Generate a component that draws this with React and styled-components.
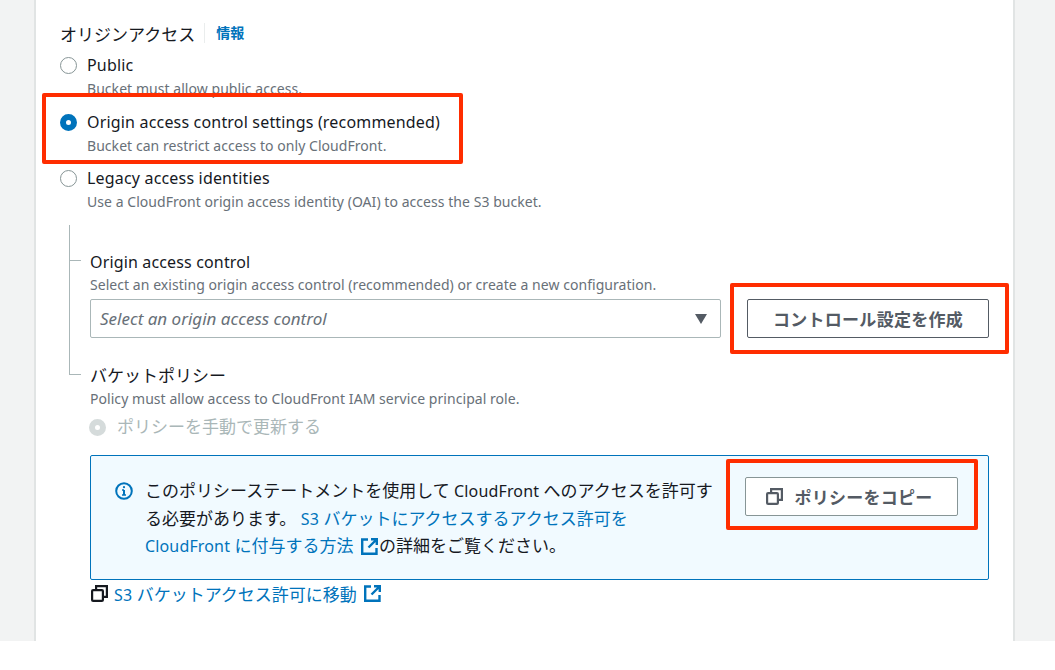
import styled, { createGlobalStyle } from 'styled-components'

const GlobalStyle = createGlobalStyle`
  html, body { margin: 0; padding: 0; background: #fff; }
  body {
    font-family: "Noto Sans", "Noto Sans CJK JP", sans-serif;
    color: #16191f;
    -webkit-font-smoothing: antialiased;
  }
`

const Page = styled.div`
  height: 641px;
  overflow: hidden;
  background: #f2f3f3;
  padding: 0 40px 0 34px;
`

const Panel = styled.main`
  height: 100%;
  box-sizing: border-box;
  background: #fff;
  border-inline: 2px solid #e1e4e4;
  padding: 21px 0 0 24px;
`

const Heading = styled.div`
  display: flex;
  align-items: center;
  height: 24px;
  margin-bottom: 8px;
  font-size: 17px;
`

const InfoLink = styled.a`
  margin-left: 9px;
  padding-left: 11px;
  border-left: 1px solid #eaeded;
  color: #0073bb;
  font-size: 14px;
  font-weight: 700;
  line-height: 20px;
`

const RadioGroup = styled.div`
  display: flex;
  flex-direction: column;
  gap: 8.5px;
`

const RadioItem = styled.div`
  position: relative;
  display: grid;
  grid-template-columns: 17px 1fr;
  column-gap: 10px;
`

const RadioDot = styled.span`
  box-sizing: border-box;
  width: 17px;
  height: 17px;
  margin-top: 4px;
  border-radius: 50%;
  background: #fff;
  border: ${({ $checked, $disabled }) =>
    $disabled ? '6px solid #d5dbdb' : $checked ? '6px solid #0073bb' : '1.5px solid #879596'};
`

const RadioLabel = styled.div`
  font-size: ${({ $jp }) => ($jp ? '17px' : '16px')};
  letter-spacing: ${({ $jp }) => ($jp ? '0' : '.18px')};
  line-height: 24px;
  color: ${({ $disabled }) => ($disabled ? '#aab7b8' : '#16191f')};
`

const Description = styled.div`
  font-size: 14px;
  letter-spacing: .05px;
  line-height: 24px;
  color: #687078;
  grid-column: 2;
`

const Tree = styled.div`
  margin: 11px 0 0 9px;
  padding-left: 21px;
  width: 899px;
`

const Field = styled.section`
  position: relative;
  padding-top: ${({ $last }) => ($last ? '27px' : '26px')};

  &::before {
    content: '';
    position: absolute;
    left: -21px;
    top: ${({ $last }) => ($last ? '36px' : '35px')};
    width: 12px;
    height: 1px;
    background: #aab7b8;
  }

  &::after {
    content: '';
    position: absolute;
    left: -21px;
    top: 0;
    width: 1px;
    height: ${({ $last }) => ($last ? '37px' : '100%')};
    background: #aab7b8;
  }
`

const FieldLabel = styled.div`
  font-size: ${({ $jp }) => ($jp ? '17px' : '16px')};
  letter-spacing: ${({ $jp }) => ($jp ? '0' : '.15px')};
  line-height: 22px;
`

const FieldHint = styled.div`
  font-size: 14px;
  letter-spacing: .05px;
  line-height: 24px;
  color: #687078;
`

const SelectRow = styled.div`
  display: flex;
  gap: 26px;
  margin-top: 2px;
`

const Select = styled.div`
  flex: 1;
  height: 39px;
  box-sizing: border-box;
  display: flex;
  align-items: center;
  justify-content: space-between;
  padding: 0 13px 0 9px;
  border: 1px solid #aab7b8;
  border-radius: 2px;
  font-size: 17px;
  font-style: italic;
  color: #687078;
`

const Caret = styled.span`
  width: 0;
  height: 0;
  border-left: 6px solid transparent;
  border-right: 6px solid transparent;
  border-top: 10px solid #545b64;
`

const Button = styled.div`
  position: relative;
  box-sizing: border-box;
  display: flex;
  align-items: center;
  justify-content: center;
  gap: 11px;
  flex: none;
  width: ${({ $width }) => $width}px;
  height: 39px;
  padding-right: ${({ $soft }) => ($soft ? '4px' : '0')};
  background: #fff;
  border: 1px solid ${({ $soft }) => ($soft ? '#879596' : '#545b64')};
  border-radius: 2px;
  color: #545b64;
  font-size: 17px;
  font-weight: 700;
  letter-spacing: .28px;
`

// 注釈の赤枠
const Highlight = styled.span`
  position: absolute;
  box-sizing: border-box;
  inset: ${({ $inset }) => $inset};
  border: 4px solid #ff2d00;
  border-radius: 2px;
  pointer-events: none;
`

const DisabledRadio = styled.div`
  display: grid;
  grid-template-columns: 17px 1fr;
  column-gap: 11px;
  margin: 4px 0 0 -1px;
`

const Alert = styled.div`
  display: flex;
  justify-content: space-between;
  align-items: flex-start;
  box-sizing: border-box;
  height: 125px;
  margin-top: 16px;
  padding: 21px 30px 0 24px;
  background: #f1faff;
  border: 1px solid #0073bb;
  border-radius: 2px;
`

const AlertBody = styled.div`
  display: flex;
  gap: 12px;
`

const AlertText = styled.p`
  margin: 0;
  font-size: 17px;
  line-height: 27.5px;
  white-space: nowrap;
`

const Latin = styled.span`
  font-size: 16px;
  letter-spacing: .15px;
  line-height: 1;
`

const Link = styled.a`
  color: #0073bb;
`

const BucketLink = styled.div`
  display: flex;
  align-items: center;
  gap: 6px;
  height: 22px;
  margin-top: 2px;
  padding-left: 1px;
  font-size: 17px;
`

const ExternalSvg = styled.svg`
  flex: none;
  vertical-align: -3px;
  margin: ${({ $inline }) => ($inline ? '0 1px 0 3px' : '0 0 0 1px')};
`

const CopyIcon = ({ color = '#16191f' }) => (
  <svg width="17" height="17" viewBox="0 0 17 17" fill="none" stroke={color} strokeWidth="2.2" style={{ flex: 'none' }}>
    <rect x="1.1" y="5.1" width="10.8" height="10.8" rx="1" />
    <path d="M5.1 5V1.1h10.8v10.8H12" />
  </svg>
)

const ExternalIcon = ({ inline }) => (
  <ExternalSvg $inline={inline} width="17" height="17" viewBox="0 0 17 17" fill="none" stroke="#0073bb" strokeWidth="2.4">
    <path d="M7 1.5H1.2v14.3h14.3V10" />
    <path d="M10 1.2h5.8V7M15.5 1.5L7.5 9.5" />
  </ExternalSvg>
)

const InfoIcon = () => (
  <svg width="18" height="18" viewBox="0 0 18 18" fill="none" style={{ flex: 'none', marginTop: 5 }}>
    <circle cx="9" cy="9" r="7.8" stroke="#0073bb" strokeWidth="2" />
    <path d="M9 8v5" stroke="#0073bb" strokeWidth="2" />
    <path d="M7 8h2M7 13h4" stroke="#0073bb" strokeWidth="1.4" />
    <circle cx="9" cy="5.2" r="1.1" fill="#0073bb" />
  </svg>
)

const radios = [
  { label: 'Public', description: 'Bucket must allow public access.' },
  { label: 'Origin access control settings (recommended)', description: 'Bucket can restrict access to only CloudFront.', checked: true },
  { label: 'Legacy access identities', description: 'Use a CloudFront origin access identity (OAI) to access the S3 bucket.' },
]

export default function App() {
  return (
    <>
      <GlobalStyle />
      <Page>
        <Panel>
          <Heading>
            オリジンアクセス
            <InfoLink>情報</InfoLink>
          </Heading>

          <RadioGroup>
            {radios.map(({ label, description, checked }) => (
              <RadioItem key={label}>
                <RadioDot $checked={checked} />
                <RadioLabel>{label}</RadioLabel>
                <Description>{description}</Description>
                {checked && <Highlight $inset="-16.5px auto -6px -18px" style={{ width: 421 }} />}
              </RadioItem>
            ))}
          </RadioGroup>

          <Tree>
            <Field>
              <FieldLabel>Origin access control</FieldLabel>
              <FieldHint>Select an existing origin access control (recommended) or create a new configuration.</FieldHint>
              <SelectRow>
                <Select>
                  Select an origin access control
                  <Caret />
                </Select>
                <Button $width={242}>
                  コントロール設定を作成
                  <Highlight $inset="-17px -21px -17px -18px" />
                </Button>
              </SelectRow>
            </Field>

            <Field $last>
              <FieldLabel $jp>バケットポリシー</FieldLabel>
              <FieldHint>Policy must allow access to CloudFront IAM service principal role.</FieldHint>
              <DisabledRadio>
                <RadioDot $disabled />
                <RadioLabel $disabled $jp>ポリシーを手動で更新する</RadioLabel>
              </DisabledRadio>
            </Field>

            <Alert>
              <AlertBody>
                <InfoIcon />
                <AlertText>
                  このポリシーステートメントを使用して <Latin>CloudFront</Latin> へのアクセスを許可す
                  <br />
                  る必要があります。 <Link><Latin>S3</Latin> バケットにアクセスするアクセス許可を</Link>
                  <br />
                  <Link><Latin>CloudFront</Latin> に付与する方法 <ExternalIcon inline /></Link>の詳細をご覧ください。
                </AlertText>
              </AlertBody>
              <Button $width={213} $soft>
                <CopyIcon color="#545b64" />
                ポリシーをコピー
                <Highlight $inset="-19px -21px -15px -20px" />
              </Button>
            </Alert>

            <BucketLink>
              <CopyIcon />
              <Link><Latin>S3</Latin> バケットアクセス許可に移動</Link>
              <ExternalIcon />
            </BucketLink>
          </Tree>
        </Panel>
      </Page>
    </>
  )
}
